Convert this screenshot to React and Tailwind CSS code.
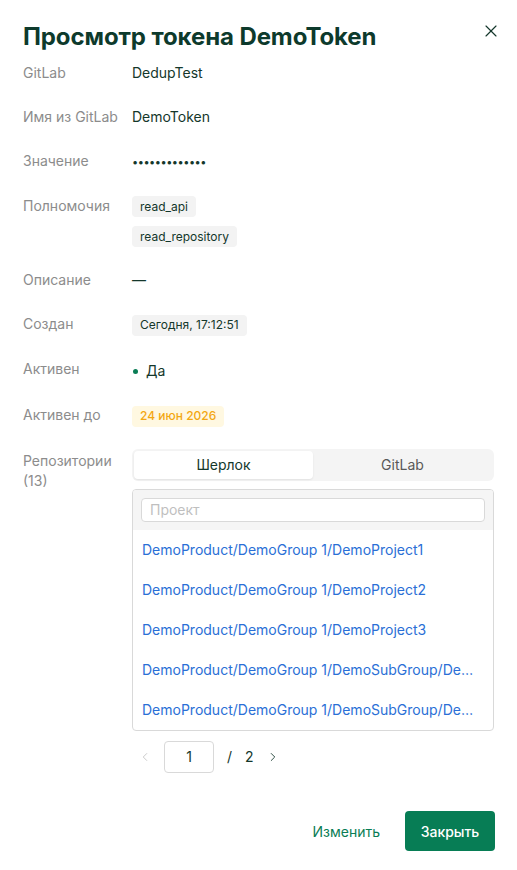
import { X, ChevronLeft, ChevronRight } from "lucide-react";

const REPOS = [
  "DemoProduct/DemoGroup 1/DemoProject1",
  "DemoProduct/DemoGroup 1/DemoProject2",
  "DemoProduct/DemoGroup 1/DemoProject3",
  "DemoProduct/DemoGroup 1/DemoSubGroup/DemoProject4",
  "DemoProduct/DemoGroup 1/DemoSubGroup/DemoProject5",
];

function Row({ label, children }) {
  return (
    <div className="flex">
      <div className="w-[109px] shrink-0 text-[14px] leading-[22px] text-[#8c8c8c]">{label}</div>
      <div className="flex-1 min-w-0 text-[14px] leading-[22px] text-[#14372b]">{children}</div>
    </div>
  );
}

function Tag({ children, className = "bg-[#f3f3f3] text-[#14372b]" }) {
  return (
    <span className={"inline-flex items-center h-[21px] px-2 rounded text-[12px] " + className}>
      {children}
    </span>
  );
}

export default function App() {
  return (
    <div className="w-[517px] h-[870px] bg-white relative" style={{ fontFamily: "Inter, 'Noto Sans', sans-serif" }}>
      <button className="absolute right-[16px] top-[21px] text-[#14372b]">
        <X size={20} strokeWidth={1.4} />
      </button>
      <div className="px-[23px] pt-[22px]">
        <h1 className="text-[24px] leading-[30px] font-bold text-[#0d3a2c] tracking-[-0.1px]">
          Просмотр токена DemoToken
        </h1>

        <div className="mt-[10px] flex flex-col gap-[22px]">
          <Row label="GitLab">DedupTest</Row>
          <Row label="Имя из GitLab">DemoToken</Row>
          <Row label="Значение">
            <span className="tracking-[-0.5px] text-[11px]">•••••••••••••</span>
          </Row>
          <Row label="Полномочия">
            <div className="flex flex-col items-start gap-[9px] pt-[1px]">
              <Tag>read_api</Tag>
              <Tag>read_repository</Tag>
            </div>
          </Row>
          <Row label="Описание">—</Row>
          <Row label="Создан">
            <Tag>Сегодня, 17:12:51</Tag>
          </Row>
          <Row label="Активен">
            <span className="inline-flex items-center gap-[8px]">
              <span className="w-[5px] h-[5px] ml-[1px] rounded-full bg-[#0a7d55]" />
              Да
            </span>
          </Row>
          <Row label="Активен до">
            <Tag className="bg-[#fff8e1] text-[#f3a712] font-medium">24 июн 2026</Tag>
          </Row>
          <div className="flex">
            <div className="w-[109px] shrink-0 text-[14px] leading-[20px] text-[#8c8c8c] pt-[2px]">
              Репозитории
              <br />
              (13)
            </div>
            <div className="flex-1 min-w-0">
              <div className="grid grid-cols-2 h-[32px] p-[2px] rounded-md bg-[#f4f4f4]">
                <div className="flex items-center justify-center rounded bg-white shadow-[0_1px_2px_rgba(0,0,0,0.08)] text-[14px] text-[#14372b]">
                  Шерлок
                </div>
                <div className="flex items-center justify-center text-[14px] text-[#595959]">GitLab</div>
              </div>
              <div className="mt-[8px] border border-[#d9d9d9] rounded overflow-hidden">
                <div className="bg-[#f5f5f5] px-[8px] pt-[8px] pb-[8px]">
                  <div className="h-[24px] border border-[#d9d9d9] rounded bg-white px-[8px] flex items-center text-[14px] text-[#bfbfbf]">
                    Проект
                  </div>
                </div>
                <div>
                  {REPOS.map((r) => (
                    <div key={r} className="h-[40px] flex items-center pl-[9px] pr-[18px]">
                      <span className="truncate text-[14px] text-[#2a6fd6]">{r}</span>
                    </div>
                  ))}
                </div>
              </div>
              <div className="mt-[10px] flex items-center h-[32px] text-[14px] text-[#14372b]">
                <ChevronLeft size={14} className="text-[#c4c4c4] ml-[6px]" strokeWidth={1.5} />
                <div className="ml-[12px] w-[50px] h-[32px] border border-[#d9d9d9] rounded flex items-center justify-center">
                  1
                </div>
                <span className="ml-[13px]">/</span>
                <span className="ml-[13px]">2</span>
                <ChevronRight size={14} className="ml-[12px]" strokeWidth={1.5} />
              </div>
            </div>
          </div>
        </div>
      </div>

      <div className="absolute right-[22px] top-[811px] flex items-center gap-[25px]">
        <span className="text-[14px] text-[#0a7d55]">Изменить</span>
        <button className="h-[40px] w-[90px] rounded bg-[#077d55] text-white text-[14px] font-medium">Закрыть</button>
      </div>
    </div>
  );
}
